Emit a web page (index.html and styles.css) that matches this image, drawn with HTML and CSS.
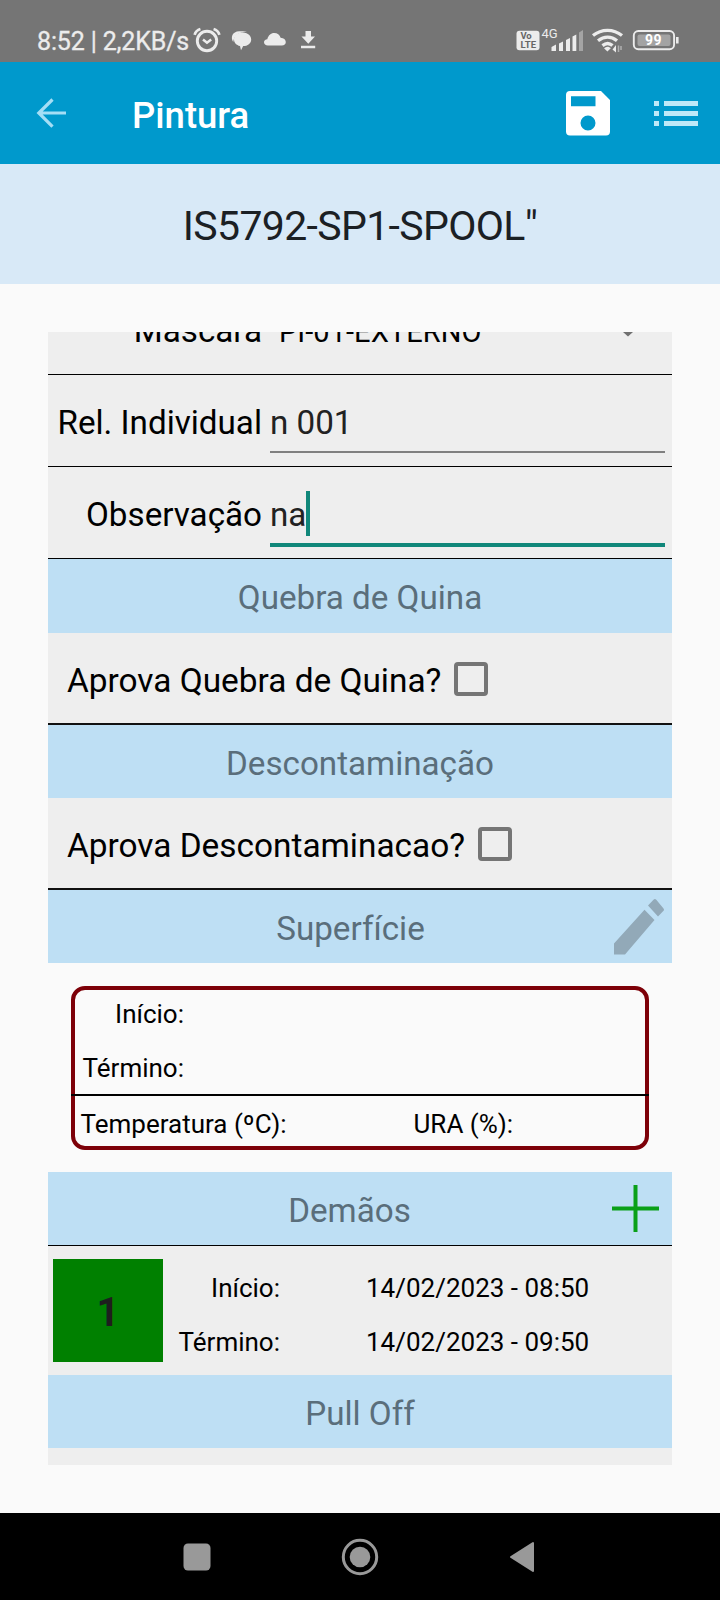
FILE: index.html
```html
<!DOCTYPE html>
<html lang="pt-BR">
<head>
<meta charset="utf-8">
<title>Pintura</title>
<link rel="stylesheet" href="styles.css">
</head>
<body>
<div class="screen">
  <div class="status">
    <span class="status-text">8:52 | 2,2KB/s</span>
    <svg class="status-left" width="130" height="61" viewBox="190 0 130 61">
      <g fill="none" stroke="#ececec">
        <circle cx="207" cy="41" r="9.700" stroke-width="2.900"/>
        <path d="M203 39.500l4 3.300 4.200-3.300" stroke-width="2.400"/>
        <path d="M194.600 34.800c.8-2.800 2.800-4.900 5.800-5.800M213.600 29c3 .9 5 3 5.800 5.800" stroke-width="2.700"/>
      </g>
      <g fill="#ececec">
        <path d="M233.200 42c-3-4.500-1-10.500 6-10.800 3-.2 6.500.1 8 1-7.500-.7-13 3-14 9.800z"/>
        <path d="M242.500 32.500c5 0 8.700 2.900 8.700 6.900s-3.500 6.600-8 6.700l-2.200 4.200-1-4.400c-3.600-.8-6-3.200-6-6.500 0-4 3.700-6.900 8.500-6.900z"/>
        <path d="M268 45.500c-2.500 0-4-1.400-4-3.200s1.400-3 3.300-3.100c1-3.700 3.500-6.200 6.900-6.200 3.300 0 5.500 2 6.400 4.800 3.200.2 5.200 2 5.200 4.300 0 2-1.500 3.400-4 3.400z"/>
        <path d="M305.500 31h5.500v5.500h4l-6.700 7.300-6.800-7.300h4zM301 45.800h14.200v2.400H301z"/>
      </g>
    </svg>
    <svg class="status-right" width="170" height="61" viewBox="514 0 170 61">
      <rect x="516.500" y="30.800" width="23" height="19.500" rx="3" fill="#ececec"/>
      <text class="volte" x="520.500" y="39.300" textLength="11">Vo</text>
      <text class="volte" x="520.500" y="48" textLength="15.500">LTE</text>
      <text class="net" x="541.500" y="38.200" textLength="16">4G</text>
      <g fill="#ececec">
        <path d="M551.500 51v-4l4.500-2.500V51zM559 51v-7.500l4-2V51zM566 51V40l4-2v13zM572.500 51V36.500l3.800-2V51z"/>
        <path d="M579 51V32.500l4-2.500v21z" opacity=".4"/>
      </g>
      <g fill="none" stroke="#ececec" stroke-width="3.300">
        <path d="M593 35.600c8.500-7 20.500-7 29 0M598 40.800c6-4.700 13.300-4.700 19 0M602.500 45.600c3.300-2.700 7-2.700 10 0"/>
      </g>
      <path d="M604 48.300c2.200-2 4.800-2 6.800 0l-3.400 3.200z" fill="#ececec"/>
      <path d="M612.500 49.500l3.500-4.500v7.500z" fill="#ececec"/>
      <path d="M618.500 45.500v6.500M621 46v4" stroke="#b0b0b0" stroke-width="1.500"/>
      <rect x="633.800" y="31" width="40.300" height="18.200" rx="4.500" fill="none" stroke="#ececec" stroke-width="1.900"/>
      <rect x="637.500" y="34.500" width="33" height="11.500" rx="2" fill="#a3a3a3"/>
      <rect x="676" y="37" width="2.600" height="6.500" fill="#ececec"/>
      <text class="batt" x="645" y="45.300" textLength="16.500">99</text>
    </svg>
  </div>

  <header class="appbar">
    <svg class="back" width="32" height="32" viewBox="36 97 32 32"><path d="M66 113H39M52.500 99.500L38.800 113l13.700 13.700" fill="none" stroke="#a5def5" stroke-width="3.200"/></svg>
    <h1 class="appbar-title">Pintura</h1>
    <svg class="save" width="46" height="46" viewBox="565 90 46 46"><path fill-rule="evenodd" fill="#fff" d="M570 91h31l9 9v31.500a4 4 0 0 1-4 4h-36a4 4 0 0 1-4-4V95a4 4 0 0 1 4-4zM571 96.300v10h24.500v-10zM580.500 123a7.500 7.500 0 1 0 15 0a7.500 7.500 0 1 0-15 0z"/></svg>
    <svg class="list" width="46" height="28" viewBox="653 100 46 28"><path fill="#bfe9f8" d="M654 101h5v5h-5zM664 101h34v5h-34zM654 111h5v5h-5zM664 111h34v5h-34zM654 121h5v5h-5zM664 121h34v5h-34z"/></svg>
  </header>

  <div class="spool">IS5792-SP1-SPOOL"</div>

  <main class="panel">
    <div class="field field-cut">
      <span class="label">Máscara</span>
      <span class="select">PI-01-EXTERNO</span>
      <svg class="caret" width="12" height="6" viewBox="0 0 12 6"><path d="M1 0h10L6 4.500z" fill="#707070"/></svg>
    </div>
    <div class="field">
      <span class="label">Rel. Individual</span>
      <span class="input"><span class="value">n 001</span></span>
    </div>
    <div class="field">
      <span class="label">Observação</span>
      <span class="input input-focus"><span class="value">na</span><i class="cursor"></i></span>
    </div>
    <h2 class="section section-first">Quebra de Quina</h2>
    <div class="check-row"><span>Aprova Quebra de Quina?</span><i class="box"></i></div>
    <h2 class="section">Descontaminação</h2>
    <div class="check-row"><span>Aprova Descontaminacao?</span><i class="box"></i></div>
    <h2 class="section section-action"><span>Superfície</span>
      <svg class="pencil" width="50" height="56" viewBox="0 0 50 56"><path fill="#92a9b8" d="M0 44.500L30.500 10.800 40.500 21 11 55.500H0zM34 6.500L39.500.8a2 2 0 0 1 2.800 0l7 8.500a2 2 0 0 1 0 2.800L44 17.500z"/></svg>
    </h2>
    <div class="surface">
      <section class="card">
        <div class="card-line"><span class="card-label">Início:</span></div>
        <div class="card-line"><span class="card-label">Término:</span></div>
        <div class="card-foot"><span>Temperatura (ºC):</span><span>URA (%):</span></div>
      </section>
    </div>
    <h2 class="section section-action section-coats"><span>Demãos</span>
      <svg class="plus" width="47" height="47" viewBox="0 0 47 47"><path d="M23.500 0v47M0 23.500h47" stroke="#0aa018" stroke-width="4"/></svg>
    </h2>
    <div class="coat">
      <div class="coat-number">1</div>
      <div class="coat-data">
        <span class="coat-label">Início:</span><span>14/02/2023 - 08:50</span>
        <span class="coat-label">Término:</span><span>14/02/2023 - 09:50</span>
      </div>
    </div>
    <h2 class="section">Pull Off</h2>
  </main>

  <nav class="nav">
    <svg width="28" height="28" viewBox="0 0 28 28"><rect x=".5" y=".5" width="27" height="27" rx="4.500" fill="#999"/></svg>
    <svg width="38" height="38" viewBox="0 0 38 38"><circle cx="19" cy="19" r="16.700" fill="none" stroke="#999" stroke-width="3"/><circle cx="19" cy="19" r="10.300" fill="#999"/></svg>
    <svg width="26" height="32" viewBox="0 0 26 32"><path d="M24 2v28L2 16z" fill="#999" stroke="#999" stroke-width="2" stroke-linejoin="round"/></svg>
  </nav>
</div>
</body>
</html>
```
FILE: styles.css
```css
* { box-sizing: border-box; }
body { margin: 0; background: #fafafa; font-family: Roboto, sans-serif; color: #000; }
svg { display: block; flex: none; }
h1, h2 { margin: 0; font-weight: 400; }
.screen { width: 720px; height: 1600px; display: flex; flex-direction: column; overflow: hidden; white-space: nowrap; }

.status { height: 62px; flex: none; display: flex; background: #757575; color: #ececec; padding: 0 36px 0 37px; }
.status-text { width: 153px; font-size: 25px; line-height: 30px; padding-top: 27px; letter-spacing: -0.15px; -webkit-text-stroke: 0.3px #ececec; }
.status-right { margin-left: auto; }
.volte { font: 700 9.500px Roboto, sans-serif; fill: #666; }
.net { font: 400 13px Roboto, sans-serif; fill: #ececec; }
.batt { font: 700 14px Roboto, sans-serif; fill: #fff; }

.appbar { height: 102px; flex: none; display: flex; align-items: center; background: #0099cc; color: #fff; padding: 0 21px 0 36px; }
.appbar-title { font-size: 36.500px; font-weight: 500; line-height: 42px; margin-left: 64px; padding-top: 5px; }
.save { margin-left: auto; }
.list { margin-left: 42px; margin-top: 2px; }

.spool { height: 120px; flex: none; background: #d8e9f7; color: #1b2024; text-align: center; font-size: 41px; letter-spacing: -0.65px; line-height: 124px; }

.panel { flex: none; width: 624px; height: 1133px; margin: 48px 48px; background: #eee; overflow: hidden; font-size: 33.200px; }
.field { height: 92px; display: grid; grid-template-columns: 214px 1fr; column-gap: 8px; padding-right: 7px; border-bottom: 1.500px solid #000; line-height: 96px; }
.label { text-align: right; }
.field-cut { height: 43px; grid-template-columns: 214px 1fr 12px; column-gap: 16px; padding-right: 38px; line-height: 38px; align-items: start; }
.field-cut .label { margin-top: -20px; }
.select { font-size: 29px; letter-spacing: 0.05px; padding-left: 1px; margin-top: -19px; }
.input { display: flex; align-items: center; height: 78px; border-bottom: 2px solid #808080; color: #222; }
.input .value { padding-top: 20px; }
.input-focus { height: 80px; border-bottom: 4px solid #10877a; }
.cursor { width: 4px; height: 45px; background: #10877a; margin-top: 16px; }

.section { height: 73px; background: #bedff4; color: #5a6e7b; text-align: center; font-size: 33.200px; line-height: 77px; }
.section-first { height: 74px; }
.check-row { height: 92px; display: flex; align-items: center; gap: 12.500px; padding: 2px 19px 0; border-bottom: 2px solid #111; font-size: 33.400px; line-height: 88px; }
.check-row span { padding-top: 4px; }
.box { width: 34px; height: 34px; border: 4px solid #757575; border-radius: 4px; }
.section-action { display: grid; grid-template-columns: 1fr 50px; align-items: center; padding-right: 8px; height: 73px; }
.section-action span { padding-left: 39px; }
.pencil { margin-top: -4px; }
.section-coats { height: 74px; border-bottom: 1px solid #000; padding-right: 13px; grid-template-columns: 1fr 47px; }
.plus { margin-top: -4px; }

.surface { height: 209px; padding: 23px; background: #fafafa; }
.card { height: 164px; border: 4px solid #7d0008; border-radius: 14px; font-size: 26px; line-height: 56px; }
.card-line { height: 54px; display: flex; }
.card-line:first-child { height: 50px; line-height: 48px; }
.card-label { width: 109px; text-align: right; }
.card-foot { display: grid; grid-template-columns: 333px 1fr; margin: 0 -4px; padding-left: 9.500px; border-top: 2px solid #000; line-height: 57px; }

.coat { height: 129px; display: flex; align-items: center; padding-left: 5px; }
.coat-number { width: 110px; height: 103px; background: #008000; color: #1e1e1e; text-align: center; font-weight: 700; font-size: 40px; line-height: 108px; }
.coat-data { display: grid; grid-template-columns: 117px 1fr; grid-auto-rows: 54px; column-gap: 86px; font-size: 26px; line-height: 54px; padding-top: 9px; }
.coat-label { text-align: right; }

.nav { flex: 1; background: #000; display: flex; align-items: center; padding-left: 183px; gap: 130px; }
```
